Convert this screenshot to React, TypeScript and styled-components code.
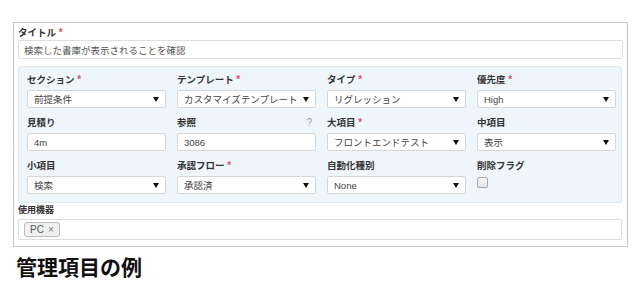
import styled, { createGlobalStyle } from "styled-components";

const GlobalStyle = createGlobalStyle`
  body {
    margin: 0;
    background: #fff;
    font-family: "Liberation Sans", "Noto Sans CJK JP", sans-serif;
    color: #333;
  }
`;

type Field = {
  label: string;
  required?: boolean;
  kind: "select" | "input" | "check";
  value?: string;
  help?: boolean;
};

const fields: Field[] = [
  { label: "セクション", required: true, kind: "select", value: "前提条件" },
  { label: "テンプレート", required: true, kind: "select", value: "カスタマイズテンプレート" },
  { label: "タイプ", required: true, kind: "select", value: "リグレッション" },
  { label: "優先度", required: true, kind: "select", value: "High" },
  { label: "見積り", kind: "input", value: "4m" },
  { label: "参照", kind: "input", value: "3086", help: true },
  { label: "大項目", required: true, kind: "select", value: "フロントエンドテスト" },
  { label: "中項目", kind: "select", value: "表示" },
  { label: "小項目", kind: "select", value: "検索" },
  { label: "承認フロー", required: true, kind: "select", value: "承認済" },
  { label: "自動化種別", kind: "select", value: "None" },
  { label: "削除フラグ", kind: "check" },
];

const App = () => {
  return (
    <Page>
      <GlobalStyle />
      <Form>
        <Label>
          <span>
            タイトル <Req>*</Req>
          </span>
        </Label>
        <TitleInput>検索した書庫が表示されることを確認</TitleInput>

        <Panel>
          {fields.map((f) => (
            <Cell key={f.label}>
              <Label>
                <span>
                  {f.label} {f.required && <Req>*</Req>}
                </span>
                {f.help && <Help>?</Help>}
              </Label>
              {f.kind === "select" && (
                <Control>
                  <Value>{f.value}</Value>
                  <Caret />
                </Control>
              )}
              {f.kind === "input" && (
                <Control>
                  <Value>{f.value}</Value>
                </Control>
              )}
              {f.kind === "check" && <Check />}
            </Cell>
          ))}
        </Panel>

        <Label $small>
          <span>使用機器</span>
        </Label>
        <TagInput>
          <Tag>
            PC <TagX>×</TagX>
          </Tag>
        </TagInput>
      </Form>
      <Caption>管理項目の例</Caption>
    </Page>
  );
};

export default App;

const Page = styled.div`
  width: 640px;
  height: 300px;
  padding: 22px 0 0 13px;
  box-sizing: border-box;
`;

const Form = styled.div`
  width: 615px;
  height: 225px;
  box-sizing: border-box;
  border: 1px solid #c9c9c9;
  padding: 3px 4px 3px 4px;
  display: flex;
  flex-direction: column;
`;

const Label = styled.div<{ $small?: boolean }>`
  display: flex;
  justify-content: space-between;
  align-items: center;
  height: 12px;
  font-size: ${(p) => (p.$small ? "9px" : "9.5px")};
  font-weight: bold;
  color: #333;
  white-space: nowrap;
`;

const Req = styled.span`
  color: #e0505e;
  font-weight: bold;
  font-size: 10px;
`;

const Help = styled.span`
  color: #999;
  font-weight: normal;
  font-size: 10px;
  padding-right: 4px;
`;

const TitleInput = styled.div`
  margin-top: 2px;
  height: 19px;
  box-sizing: border-box;
  border: 1px solid #dedede;
  border-radius: 2px;
  padding: 0 5px;
  display: flex;
  align-items: center;
  font-size: 9.5px;
  color: #555;
`;

const Panel = styled.div`
  margin-top: 7px;
  width: 604px;
  box-sizing: border-box;
  background: #eef6fb;
  border: 1px solid #dde9ef;
  border-radius: 2px;
  padding: 6px 10px 8px 8px;
  display: grid;
  grid-template-columns: repeat(4, 139px);
  column-gap: 11px;
  row-gap: 8px;
`;

const Cell = styled.div`
  display: flex;
  flex-direction: column;
  gap: 5px;
`;

const Control = styled.div`
  height: 18px;
  box-sizing: border-box;
  background: #fff;
  border: 1px solid #d6d6d6;
  border-radius: 2px;
  padding: 0 6px 0 6px;
  display: flex;
  align-items: center;
  font-size: 9.5px;
  color: #444;
  white-space: nowrap;
`;

const Value = styled.span`
  flex: 1;
  min-width: 0;
  overflow: hidden;
`;

const Caret = styled.span`
  width: 0;
  height: 0;
  border-left: 3px solid transparent;
  border-right: 3px solid transparent;
  border-top: 5px solid #111;
  flex-shrink: 0;
  margin-left: 2px;
`;

const Check = styled.span`
  width: 9px;
  height: 9px;
  margin-top: 1px;
  border: 1px solid #aaa;
  border-radius: 2px;
  background: linear-gradient(#fafafa, #e4e4e4);
`;

const TagInput = styled.div`
  margin-top: 4px;
  height: 21px;
  width: 604px;
  box-sizing: border-box;
  border: 1px solid #dedede;
  border-radius: 2px;
  padding: 0 5px;
  display: flex;
  align-items: center;
`;

const Tag = styled.span`
  height: 15px;
  box-sizing: border-box;
  padding: 0 5px;
  border: 1px solid #bbb;
  border-radius: 3px;
  background: #f0f0f0;
  display: flex;
  align-items: center;
  gap: 4px;
  font-size: 10px;
  color: #555;
`;

const TagX = styled.span`
  color: #777;
  font-size: 10px;
`;

const Caption = styled.div`
  margin-top: 6px;
  margin-left: 3px;
  font-family: "Noto Sans CJK JP", sans-serif;
  font-size: 21px;
  font-weight: bold;
  line-height: 26px;
  color: #111;
`;
